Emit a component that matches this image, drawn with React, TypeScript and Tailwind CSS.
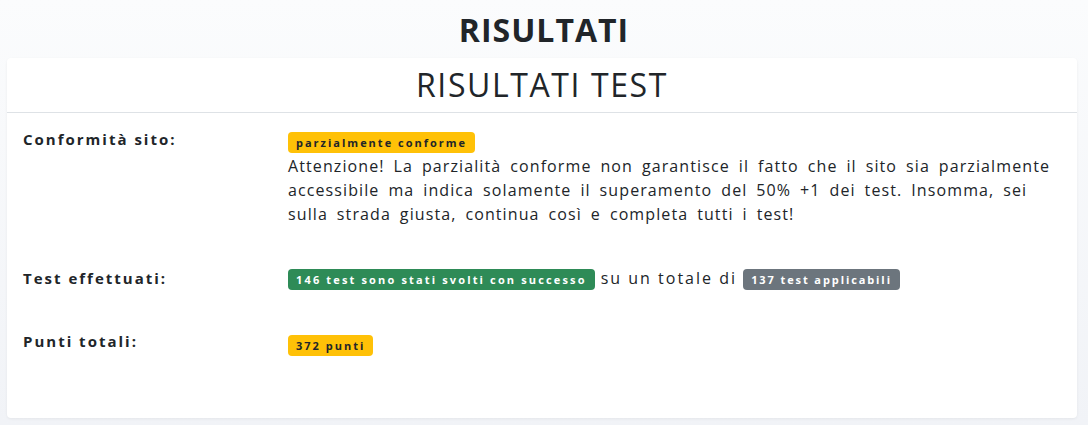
import React from "react";

const Badge: React.FC<{ tone: "warning" | "success" | "secondary"; children: React.ReactNode }> = ({ tone, children }) => {
  const cls =
    tone === "warning"
      ? "bg-[#ffc107] text-[#212529] tracking-[2px]"
      : tone === "success"
      ? "bg-[#2e8b57] text-white tracking-[2.15px]"
      : "bg-[#6c757d] text-white tracking-[1.9px]";
  return (
    <span
      className={`inline-block rounded-[4px] px-[8px] py-[3px] text-[11px] font-bold leading-[15px] align-middle ${cls}`}
    >
      {children}
    </span>
  );
};

const Row: React.FC<{ label: string; className?: string; children: React.ReactNode }> = ({ label, className, children }) => (
  <div className={`flex ${className ?? "mb-[40px]"}`}>
    <div className="w-[265px] shrink-0 text-[15px] font-bold tracking-[2px] leading-[20px]">{label}</div>
    <div className="flex-1">{children}</div>
  </div>
);

export default function App() {
  return (
    <div
      className="min-h-screen bg-gradient-to-b from-[#fbfcfd] to-[#f1f3f7] text-[#212529]"
      style={{ fontFamily: '"Open Sans", "Noto Sans", sans-serif' }}
    >
      <h1 className="text-center text-[32px] font-bold leading-[40px] tracking-[1px] pt-[10px]">RISULTATI</h1>
      <div className="ml-[7px] mr-[11px] mt-[8px] h-[360px] rounded-[4px] bg-white shadow-[0_1px_3px_rgba(0,0,0,0.06)]">
        <div className="border-b border-[#dee2e6] text-center text-[32px] font-normal leading-[54px] tracking-[1.6px]">
          RISULTATI TEST
        </div>
        <div className="pl-[16px] pr-[10px] pt-[16px]">
          <Row label="Conformità sito:" className="mb-[42px]">
            <Badge tone="warning">parzialmente conforme</Badge>
            <p className="mt-[1px] text-[16px] leading-[24px] tracking-[1.1px] [word-spacing:3.7px]">
              Attenzione! La parzialità conforme non garantisce il fatto che il sito sia parzialmente accessibile ma indica
              solamente il superamento del 50% +1 dei test. Insomma, sei sulla strada giusta, continua così e completa tutti i
              test!
            </p>
          </Row>
          <Row label="Test effettuati:" className="mb-[41px]">
            <div className="text-[16px] leading-[20px] tracking-[2px]">
              <Badge tone="success">146 test sono stati svolti con successo</Badge>
              <span className="ml-[6px]">su un totale di</span>{" "}
              <Badge tone="secondary">137 test applicabili</Badge>
            </div>
          </Row>
          <Row label="Punti totali:">
            <Badge tone="warning">372 punti</Badge>
          </Row>
        </div>
      </div>
    </div>
  );
}
